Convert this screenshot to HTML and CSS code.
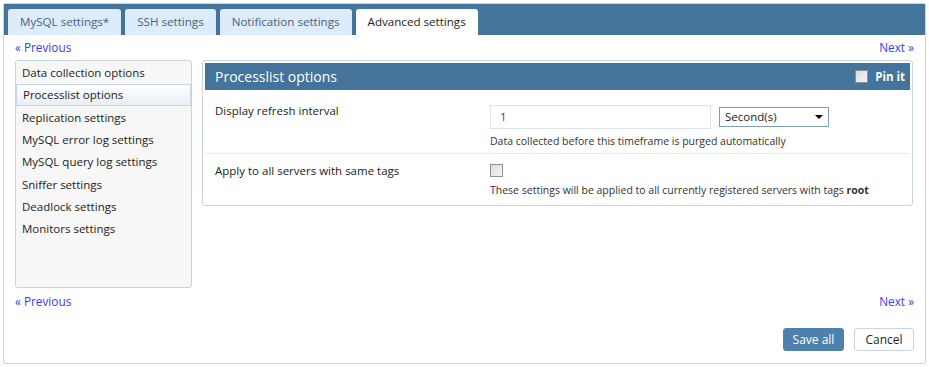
FILE: index.html
```html
<!DOCTYPE html>
<html>
<head>
    <link rel="stylesheet" href="styles.css">
</head>
<body>
    <div class="settingsBox">
        <div class="tabBar">
            <div class="tab">MySQL settings*</div>
            <div class="tab">SSH settings</div>
            <div class="tab">Notification settings</div>
            <div class="tab active">Advanced settings</div>
        </div>
        <div class="pager">
            <a href="#">« Previous</a>
            <a href="#">Next »</a>
        </div>
        <div class="content">
            <ul class="sideMenu">
                <li>Data collection options</li>
                <li class="selected">Processlist options</li>
                <li>Replication settings</li>
                <li>MySQL error log settings</li>
                <li>MySQL query log settings</li>
                <li>Sniffer settings</li>
                <li>Deadlock settings</li>
                <li>Monitors settings</li>
            </ul>
            <div class="panel">
                <div class="panelHead">
                    <span class="panelTitle">Processlist options</span>
                    <label class="pinIt"><span class="checkBox"></span>Pin it</label>
                </div>
                <div class="formRow first">
                    <div class="rowLabel">Display refresh interval</div>
                    <div class="rowField">
                        <div class="fieldLine">
                            <div class="textInput">1</div>
                            <div class="selectBox">Second(s)<span class="caret"></span></div>
                        </div>
                        <div class="help">Data collected before this timeframe is purged automatically</div>
                    </div>
                </div>
                <div class="formRow last">
                    <div class="rowLabel">Apply to all servers with same tags</div>
                    <div class="rowField">
                        <div class="fieldLine"><span class="checkBox"></span></div>
                        <div class="help">These settings will be applied to all currently registered servers with tags <b>root</b></div>
                    </div>
                </div>
            </div>
        </div>
        <div class="pager bottom">
            <a href="#">« Previous</a>
            <a href="#">Next »</a>
        </div>
        <div class="actions">
            <button class="btn primary">Save all</button>
            <button class="btn">Cancel</button>
        </div>
    </div>
</body>
</html>
```

FILE: styles.css
```css
body {
    margin: 0;
    padding: 3px;
    background: #ffffff;
    font-family: 'Open Sans', 'Noto Sans', Arial, sans-serif;
    font-size: 11.5px;
    color: #222;
}
.settingsBox {
    width: 921px;
    height: 359px;
    border: 1px solid #c5d5e3;
    border-radius: 2px;
    display: flex;
    flex-direction: column;
}
.tabBar {
    background-color: #44739b;
    height: 26px;
    padding: 5px 0 0 4px;
    display: flex;
    gap: 4px;
}
.tab {
    background-color: #dcecfa;
    color: #4a6179;
    border-radius: 3px 3px 0 0;
    padding: 0 12px;
    line-height: 26px;
    font-size: 11.6px;
}
.tab.active {
    background-color: #fff;
    color: #222;
}
.pager {
    display: flex;
    justify-content: space-between;
    padding: 4px 11px 0 11px;
    height: 18px;
}
.pager a {
    color: #3a3af0;
    text-decoration: none;
    font-size: 11.8px;
}
.pager.bottom {
    padding-top: 5px;
    height: 25px;
}
.content {
    display: flex;
    align-items: flex-start;
    padding: 3px 12px 0 11px;
    gap: 10px;
}
.sideMenu {
    list-style: none;
    margin: 0;
    padding: 1px 0;
    width: 175px;
    height: 224px;
    background-color: #f7f7f7;
    border: 1px solid #c5d5e3;
    border-radius: 3px;
}
.sideMenu li {
    padding: 0 5px;
    line-height: 20px;
    height: 20px;
    margin-bottom: 0.35px;
    border: 1px solid transparent;
    color: #222;
}
.sideMenu li.selected {
    background: linear-gradient(#ffffff, #e8eef5);
    border-color: #c5d5e3;
    padding-left: 6px;
}
.panel {
    flex: 1;
    border: 1px solid #c5d5e3;
    border-radius: 3px;
    padding: 2px 2px 0 2px;
}
.panelHead {
    background-color: #44739b;
    height: 27px;
    display: flex;
    align-items: center;
    justify-content: space-between;
    padding: 0 5px 0 10px;
    color: #fff;
}
.panelTitle {
    font-size: 14px;
}
.pinIt {
    display: flex;
    align-items: center;
    font-weight: bold;
    font-size: 11.5px;
    gap: 7px;
}
.checkBox {
    display: inline-block;
    width: 11px;
    height: 11px;
    border: 1px solid #8e8f8f;
    background: linear-gradient(135deg, #dcdcdc, #f4f4f4);
}
.formRow {
    display: flex;
    padding: 0 10px;
    line-height: 17px;
}
.formRow.first {
    padding-top: 12px;
    padding-bottom: 4px;
    border-bottom: 1px solid #e5ebf0;
}
.formRow.first .rowField {
    padding-top: 3px;
    gap: 5px;
}
.formRow.last {
    padding-top: 8px;
    padding-bottom: 7px;
}
.formRow.last .rowField {
    padding-top: 2px;
    gap: 6px;
}
.rowLabel {
    width: 275px;
}
.rowField {
    display: flex;
    flex-direction: column;
}
.fieldLine {
    display: flex;
    align-items: center;
    gap: 8px;
}
.textInput {
    width: 210px;
    height: 22px;
    line-height: 22px;
    border: 1px solid #dde3e8;
    padding-left: 9px;
    color: #444;
}
.selectBox {
    width: 103px;
    height: 18px;
    line-height: 18px;
    border: 1px solid #7f9db9;
    padding-left: 5px;
    position: relative;
}
.caret {
    position: absolute;
    right: 5px;
    top: 7px;
    border-left: 4px solid transparent;
    border-right: 4px solid transparent;
    border-top: 4px solid #000;
}
.help {
    font-size: 10.5px;
    line-height: 15px;
    color: #333;
}
.actions {
    display: flex;
    justify-content: flex-end;
    gap: 10px;
    padding: 10px 11px 0 0;
}
.btn {
    font-family: 'Open Sans', 'Noto Sans', Arial, sans-serif;
    font-size: 12px;
    height: 23px;
    width: 60px;
    padding: 0;
    border: 1px solid #c5d5e3;
    border-radius: 3px;
    background: #fff;
    color: #222;
}
.btn.primary {
    width: 61px;
    background-color: #4d80ab;
    border-color: #4d80ab;
    color: #fff;
}
```
